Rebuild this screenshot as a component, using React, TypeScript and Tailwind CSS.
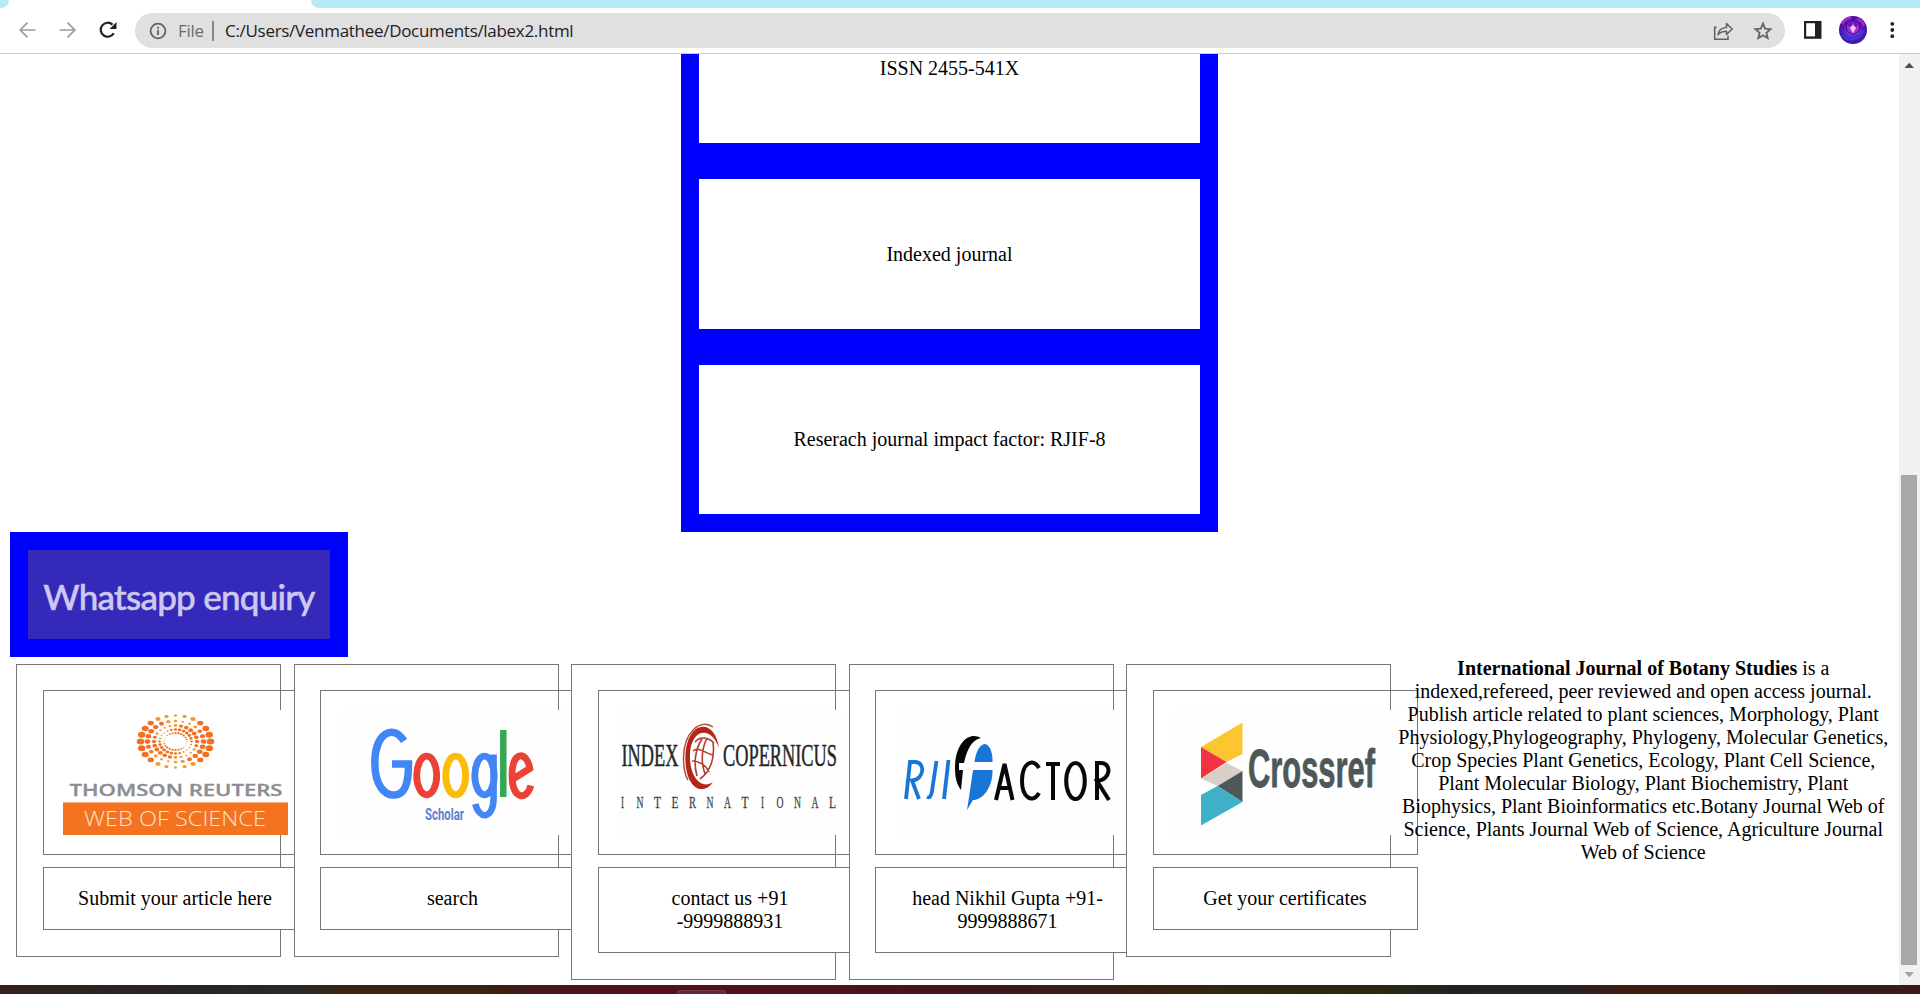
import React from "react";

const sans = "'Open Sans', sans-serif";

function BrowserBar() {
  return (
    <header className="shrink-0">
      <div className="flex h-2 justify-between bg-white">
        <div className="h-2 w-[9px] rounded-br-lg bg-[#b5e9f4]" />
        <div className="h-2 w-[1609px] rounded-bl-lg bg-[#b5e9f4]" />
      </div>
      <div className="flex h-[46px] items-center border-b border-[#cccccc] bg-white">
        <svg className="h-[45px] w-[135px]" viewBox="0 8 135 45" fill="none" strokeWidth="1.7">
          <path d="M35.5 30H20.5M27.5 22.700L20.200 30L27.500 37.300" stroke="#9c9c9c" />
          <path d="M59.500 30H74.500M67.500 22.700L74.800 30L67.500 37.300" stroke="#9c9c9c" />
          <path d="M113.800 33.200A7 7 0 1 1 112.500 24.600" stroke="#202124" strokeWidth="2.200" />
          <path d="M116.500 22V29H109.500Z" fill="#202124" />
        </svg>
        <div className="flex h-[35px] w-[1650px] items-center rounded-full bg-[#e0e0e0]">
          <svg className="ml-[14px] h-[18px] w-[18px]" viewBox="0 0 18 18">
            <circle cx="9" cy="9" r="7.400" fill="none" stroke="#5f6368" strokeWidth="1.800" />
            <path d="M8.100 8h1.800v5H8.100zM8.100 4.800h1.800v1.900H8.100z" fill="#5f6368" />
          </svg>
          <span className="ml-[11px] w-[34px] text-[17px] leading-none tracking-[-0.3px] text-[#6a6d70] font-['Open_Sans',sans-serif]">File</span>
          <span className="h-5 w-0.5 bg-[#85878a]" />
          <span className="ml-[11px] whitespace-nowrap text-[17px] leading-none tracking-[-0.3px] text-[#202124] font-['Open_Sans',sans-serif]">C:/Users/Venmathee/Documents/labex2.html</span>
          <svg className="ml-auto mr-[10.5px] h-[22px] w-[62px]" viewBox="0 0 62 22" fill="none" stroke="#5f6368" strokeWidth="1.500">
            <path d="M3.500 7.200H1.700V19.200H15V15.500" />
            <path d="M5 14.800C5.500 10.500 8.500 7.600 13.500 7.400V3.600L19.200 9L13.500 14.400V11.200C9.500 11.200 7 12.200 5 14.800Z" strokeLinejoin="round" />
            <path d="M50 3.600L52.100 8.700L57.600 9.200L53.400 12.800L54.700 18.200L50 15.300L45.300 18.200L46.600 12.800L42.400 9.200L47.900 8.700Z" strokeWidth="1.800" />
          </svg>
        </div>
        <svg className="h-[45px] w-[135px]" viewBox="1785 8 135 45">
          <defs>
            <radialGradient id="avatar">
              <stop offset="0" stopColor="#f59aff" />
              <stop offset=".25" stopColor="#a83de6" />
              <stop offset=".65" stopColor="#5a17bd" />
              <stop offset="1" stopColor="#4112a0" />
            </radialGradient>
          </defs>
          <path d="M1804 21h17.500v17.800H1804z" fill="#202124" />
          <path d="M1806.200 23.200h8.800v13.200h-8.800z" fill="#fff" />
          <circle cx="1853" cy="30" r="14" fill="url(#avatar)" />
          <path d="M1842 24C1845 19 1849 18 1851 18M1857 19C1861 20 1863 23 1864 26" fill="none" stroke="#b81fd0" strokeWidth="2.500" />
          <path d="M1842 35C1849 43 1860 40 1864 30M1843 31C1847 39 1854 38 1858 34" fill="none" stroke="#2b45dd" strokeWidth="1.500" />
          <path d="M1846 23L1850 26L1853 20L1856 26L1860 23L1859 31L1853 35L1847 31Z" fill="#a22fdc" stroke="#35107e" />
          <path d="M1850 28L1853 25L1856 28L1853 33Z" fill="#ffc5ff" />
          <circle cx="1892.300" cy="23.800" r="1.900" fill="#202124" />
          <circle cx="1892.300" cy="30" r="1.900" fill="#202124" />
          <circle cx="1892.300" cy="36.200" r="1.900" fill="#202124" />
        </svg>
      </div>
    </header>
  );
}

function ThomsonLogo() {
  const rings = [
    { rx: 35, ry: 26, r: 3.3, n: 24 },
    { rx: 28, ry: 20.5, r: 2.5, n: 24 },
    { rx: 21.5, ry: 16, r: 2.1, n: 24 },
    { rx: 16, ry: 12, r: 1.6, n: 24 },
    { rx: 11.5, ry: 8.5, r: 1.1, n: 24 },
  ];
  return (
    <svg className="block h-[125px] w-[225px]" viewBox="0 0 225 125">
      <rect width="225" height="125" fill="#fff" />
      {rings.map((ring, k) =>
        Array.from({ length: ring.n }, (_, i) => {
          const a = (i / ring.n) * Math.PI * 2;
          const peak = [0, 0.35, -0.6, -0.9, -1.2][k];
          const w = 0.4 + 0.6 * Math.abs(Math.cos(a - peak));
          return (
            <ellipse
              key={k + "-" + i}
              cx={112.5 + ring.rx * Math.cos(a)}
              cy={31.5 + ring.ry * Math.sin(a)}
              rx={ring.r * w * 1.15}
              ry={ring.r * w * 0.9}
              fill={w > 0.75 ? "#f36f21" : "#f8992e"}
            />
          );
        })
      )}
      <text x="6.500" y="86" textLength="213" lengthAdjust="spacingAndGlyphs" fontFamily={sans} fontWeight="600" fontSize="15.500" fill="#8b8d92" stroke="#8b8d92" strokeWidth="0.300">THOMSON REUTERS</text>
      <rect y="92" width="225" height="33" fill="#f47321" />
      <rect y="92" width="225" height="1" fill="#f8ae80" />
      <text x="21" y="116" textLength="182" lengthAdjust="spacingAndGlyphs" fontFamily={sans} fontWeight="300" fontSize="19.500" fill="#fde0cd">WEB OF SCIENCE</text>
    </svg>
  );
}

function GoogleLogo() {
  return (
    <svg className="block h-[125px] w-[225px]" viewBox="0 0 225 125" fill="none">
      <rect width="225" height="125" fill="#fefefe" />
      <path d="M64 31C52 12.500 34.800 25 34.800 53C34.800 77 46 86 55 85C64.500 84 68.500 75 68.500 54H52" stroke="#4285f4" strokeWidth="7.500" />
      <ellipse cx="86.700" cy="65.500" rx="10" ry="19.300" stroke="#ea4335" strokeWidth="6.800" />
      <ellipse cx="115.700" cy="65.500" rx="10" ry="19.300" stroke="#fbbc05" strokeWidth="6.800" />
      <ellipse cx="144.500" cy="65.500" rx="9.700" ry="19.300" stroke="#4285f4" strokeWidth="6.800" />
      <path d="M153.600 44.500V88C153.600 109 139.500 110.500 135.300 94" stroke="#4285f4" strokeWidth="6.500" />
      <path d="M163.300 20V87" stroke="#34a853" strokeWidth="6.500" />
      <path d="M173 69L189.800 58.500C187 41 172 40 172 65C172 90 187 91 190.800 75.500" stroke="#ea4335" strokeWidth="6.800" />
      <text x="85" y="109.500" textLength="39" lengthAdjust="spacingAndGlyphs" fontFamily="Roboto, sans-serif" fontWeight="700" fontSize="17" fill="#5c80cf">Scholar</text>
    </svg>
  );
}

function CopernicusLogo() {
  const serif = "'Liberation Serif', serif";
  return (
    <svg className="block h-[125px] w-[225px]" viewBox="0 0 225 125">
      <rect width="225" height="125" fill="#fefefe" />
      <g fontFamily={serif} fontSize="32" fill="#262626" stroke="#262626" strokeWidth="0.500">
        <text x="3.500" y="55.500" textLength="57" lengthAdjust="spacingAndGlyphs">INDEX</text>
        <text x="105" y="55.500" textLength="114" lengthAdjust="spacingAndGlyphs">COPERNICUS</text>
      </g>
      <path d="M101 38C97 9 71 9 67.500 43C65.500 77 84 88 95 72C84 80 71 68 72 44C73 19 93 15 101 38Z" fill="#b32617" />
      <path d="M95 17C82 8 65.500 23 65.500 48C65.500 58 67 65 70 70" fill="none" stroke="#b94b3e" strokeWidth="1.500" />
      <path d="M77 32C82 26 90 27 96 33M75 41C81 36 88 44 95 45M74 51C81 51 88 55 91 62M84 29C76 41 76 56 79 66M89 28C82 42 84 56 87 64M95 33C97 47 93 61 82 69" fill="none" stroke="#b43a2c" strokeWidth="1.600" />
      <g fontFamily={serif} fontSize="17" fill="#444" stroke="#444" strokeWidth="0.300">
        {"INTERNATIONAL".split("").map((c, i) => (
          <text key={i} x={4.5 + i * 17.5} y="97.500" textLength={c === "I" ? 3 : 7} lengthAdjust="spacingAndGlyphs" textAnchor="middle">{c}</text>
        ))}
      </g>
    </svg>
  );
}

function RjiLogo() {
  return (
    <svg className="block h-[125px] w-[225px]" viewBox="0 0 225 125">
      <rect width="225" height="125" fill="#fefefe" />
      <g fill="none" stroke="#1976d8" strokeWidth="3.800">
        <path d="M11 89L15 52H20C31 52 29 70 17 70.500L24 89" />
        <path d="M41.500 51L37 81C36 87 34.500 88 32 87" />
        <path d="M53.500 50L49 89" />
      </g>
      <path d="M86 28C75 21 60 32 60 58C60 68 62 75 66 80L68 60H64V53H69C72 39 77 30 86 28Z" fill="#050505" />
      <path d="M79.500 52C81 40 86 34 90 34C95 35 98 43 97.500 52ZM78 60H97.500C98 77 88 90 78 90L72 100L74.500 84Z" fill="#1976d8" />
      <g fill="none" stroke="#080808" strokeWidth="4">
        <path d="M101 90L109.500 54L117.500 90M104 78H115.500" />
        <path d="M144 58C138 47 127 53 127 71C127 88 138 94 144 83" />
        <path d="M151 54H165M158 54V90" />
        <ellipse cx="180.500" cy="71" rx="9.300" ry="18" />
        <path d="M202 90V53H206C217 53 216 70 202 71L214 90" />
      </g>
    </svg>
  );
}

function CrossrefLogo() {
  return (
    <svg className="block h-[125px] w-[225px]" viewBox="0 0 225 125">
      <rect width="225" height="125" fill="#fefefe" />
      <path d="M69.500 12.500V44L53.500 52L28 37Z" fill="#fdc52f" />
      <path d="M28 37L53.500 52L28 68.500Z" fill="#ef3340" />
      <path d="M28 68.500L53.500 53L69.500 61L44.500 76Z" fill="#d8cfc6" />
      <path d="M69.500 61V92L44.500 76Z" fill="#4f5859" />
      <path d="M28 85L44.500 76L69.500 92L28 115.500Z" fill="#3eb1c8" />
      <text x="75" y="76.500" textLength="127" lengthAdjust="spacingAndGlyphs" fontFamily="'Liberation Sans', sans-serif" fontWeight="700" fontSize="54" fill="#4f5859" stroke="#4f5859" strokeWidth="0.800">Crossref</text>
    </svg>
  );
}

const cards = [
  { logo: <ThomsonLogo />, label: "Submit your article here" },
  { logo: <GoogleLogo />, label: "search" },
  { logo: <CopernicusLogo />, label: "contact us +91 -9999888931" },
  { logo: <RjiLogo />, label: "head Nikhil Gupta +91-9999888671" },
  { logo: <CrossrefLogo />, label: "Get your certificates" },
];

function Card({ logo, label }: { logo: React.ReactNode; label: string }) {
  return (
    <div className="relative flex w-[265px] shrink-0 flex-col gap-3 border border-[#767676] bg-white pt-[25px] pb-[26px] pl-[25.25px]">
      <div className="w-[265px] border border-[#767676] p-[19px]">{logo}</div>
      <div className="w-[265px] border border-[#767676] bg-white p-[19px] text-center">{label}</div>
    </div>
  );
}

function Scrollbar() {
  return (
    <div className="flex w-[21px] flex-col items-center bg-[#f1f1f1]">
      <svg className="h-[21px] w-[21px] shrink-0" viewBox="0 0 21 21">
        <path d="M5.500 14L10.300 8.800L15 14Z" fill="#505050" />
      </svg>
      <div className="mt-[400px] mr-px h-[490px] w-4 bg-[#a8a8a8]" />
      <svg className="h-5 w-[21px] shrink-0" viewBox="0 0 21 20">
        <path d="M5.500 7L10.300 12.200L15 7Z" fill="#a3a3a3" />
      </svg>
    </div>
  );
}

export default function App() {
  return (
    <div className="flex h-[994px] w-[1920px] flex-col overflow-hidden bg-white text-black">
      <BrowserBar />
      <div className="flex h-[931px] overflow-hidden">
        <main className="flex w-[1899px] flex-col text-[20px] leading-[23px] font-['Liberation_Serif',serif]">
          <section className="ml-[681px] flex h-[478px] w-[537px] shrink-0 flex-col gap-9 bg-[#0000ff] px-[18px] pb-[18px]">
            <div className="flex h-[89px] shrink-0 justify-center bg-white pt-[3px]">ISSN 2455-541X</div>
            <div className="flex h-[150px] shrink-0 items-center justify-center bg-white">Indexed journal</div>
            <div className="flex h-[149px] shrink-0 items-center justify-center bg-white">Reserach journal impact factor: RJIF-8</div>
          </section>
          <div className="ml-[10px] flex h-[125px] w-[338px] shrink-0 items-center justify-center border-[18px] border-[#0000ff] bg-[#3429b8]">
            <span className="whitespace-nowrap pt-1 text-[35px] leading-none font-medium tracking-[-0.75px] text-[#cdc8f0] [-webkit-text-stroke:0.5px_#cdc8f0] font-['Comic_Sans_MS','Lato',sans-serif]">Whatsapp enquiry</span>
          </div>
          <div className="flex">
            <div className="flex items-start gap-[12.5px] pt-[7px] pl-[16.25px]">
              {cards.map((c) => (
                <Card key={c.label} logo={c.logo} label={c.label} />
              ))}
            </div>
            <p className="relative ml-[5.5px] w-[493px] shrink-0 text-center">
              <b>International Journal of Botany Studies</b> is a indexed,refereed, peer reviewed and open access journal. Publish article related to plant sciences, Morphology, Plant Physiology,Phylogeography, Phylogeny, Molecular Genetics, Crop Species Plant Genetics, Ecology, Plant Cell Science, Plant Molecular Biology, Plant Biochemistry, Plant Biophysics, Plant Bioinformatics etc.Botany Journal Web of Science, Plants Journal Web of Science, Agriculture Journal Web of Science
            </p>
          </div>
        </main>
        <Scrollbar />
      </div>
      <footer className="flex h-[9px] shrink-0 items-end bg-[linear-gradient(90deg,#35221a_0%,#2b2425_8%,#272828_15%,#38240f_18%,#38240f_25%,#48151b_28%,#55101a_34%,#4a131c_48%,#3a1c17_53%,#352414_62%,#2c2811_72%,#202223_76%,#252324_81%,#411b12_85%,#411b12_90%,#30201c_94%,#3d1a14_100%)]">
        <div className="ml-[677px] h-[4px] w-[49px] rounded-t-sm border-x border-t border-[#70414a] bg-[#602b34]" />
      </footer>
    </div>
  );
}
